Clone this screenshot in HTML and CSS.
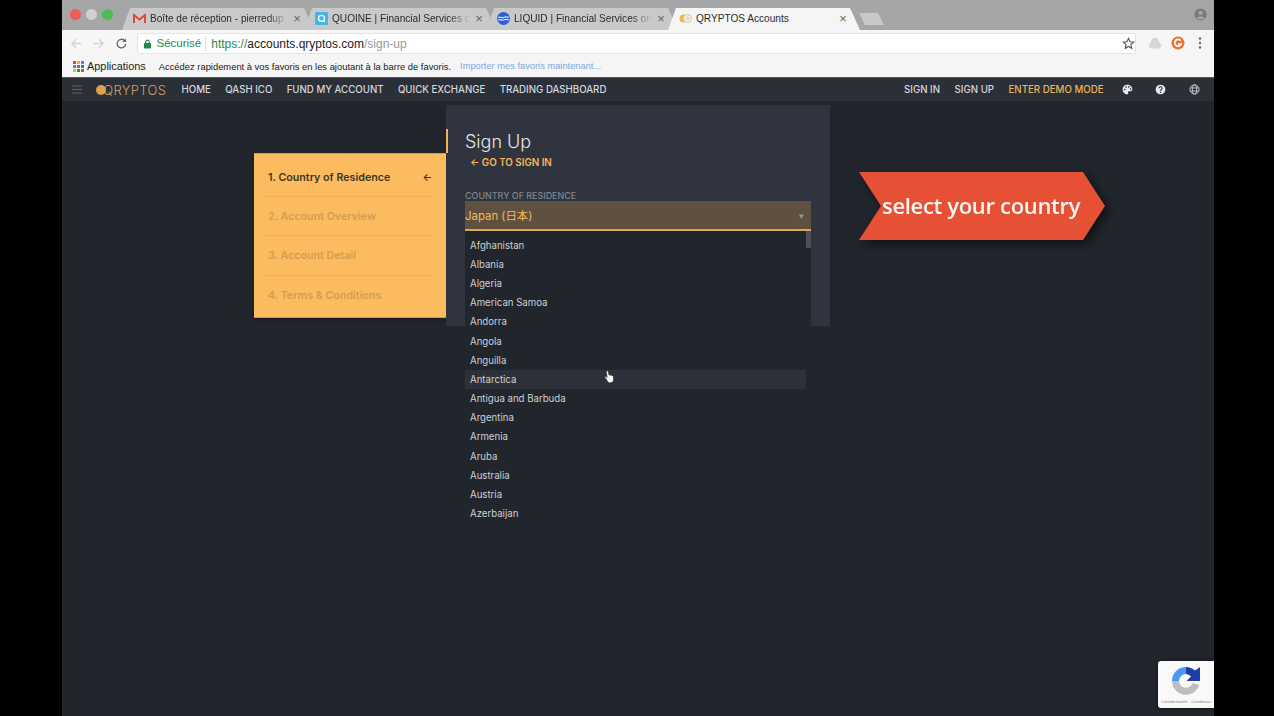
FILE: index.html
```html
<!DOCTYPE html>
<html lang="fr">
<head>
<meta charset="utf-8">
<title>QRYPTOS Accounts</title>
<link rel="stylesheet" href="styles.css">
</head>
<body>
<div class="window">
  <header class="tabstrip">
    <div class="lights"><i class="light red"></i><i class="light grey"></i><i class="light green"></i></div>
    <div class="tabs">
      <div class="tab">
        <svg class="fav" viewBox="0 0 13 13"><path d="M1 11V3l5.500 4.500L12 3v8" fill="none" stroke="#d9493c" stroke-width="2"/></svg>
        <span class="tab-title">Boîte de réception - pierredup</span><span class="tab-x">×</span>
      </div>
      <div class="tab">
        <svg class="fav" viewBox="0 0 13 13"><rect width="13" height="13" rx="1.500" fill="#41b4e8"/><circle cx="6.500" cy="6.300" r="3" fill="none" stroke="#fff" stroke-width="1.300"/><path d="M8 8l2 2" stroke="#fff" stroke-width="1.300"/></svg>
        <span class="tab-title">QUOINE | Financial Services on</span><span class="tab-x">×</span>
      </div>
      <div class="tab">
        <svg class="fav" viewBox="0 0 13 13"><circle cx="6.500" cy="6.500" r="6.500" fill="#2a5fd6"/><path d="M1 5.500c2-1.500 3.500 1 5.500 0s3.500-1 5.500 0M1 8c2-1.500 3.500 1 5.500 0s3.500-1 5.500 0" fill="none" stroke="#cfe0f7" stroke-width="1.200"/></svg>
        <span class="tab-title">LIQUID | Financial Services on</span><span class="tab-x">×</span>
      </div>
      <div class="tab active">
        <svg class="fav" viewBox="0 0 13 13"><circle cx="4.500" cy="6.500" r="4" fill="#e9b94f"/><circle cx="8.500" cy="6.500" r="4" fill="#f4f4f4" stroke="#d8c48a"/><circle cx="8.500" cy="6.500" r="1.500" fill="none" stroke="#d8c48a"/></svg>
        <span class="tab-title">QRYPTOS Accounts</span><span class="tab-x">×</span>
      </div>
      <div class="newtab"></div>
    </div>
    <svg class="profile" viewBox="0 0 14 14"><circle cx="7" cy="7" r="6.500" fill="#7a7a7a"/><circle cx="7" cy="5.200" r="2.300" fill="#a5a5a5"/><path d="M2.800 10.800c1-2.200 7.400-2.200 8.400 0-1.500 1.800-6.900 1.800-8.400 0z" fill="#a5a5a5"/></svg>
  </header>

  <div class="toolbar">
    <svg class="tool" viewBox="0 0 14 14"><path d="M12 7H2M6.500 2.500L2 7l4.500 4.500" fill="none" stroke="#d4d4d4" stroke-width="1.400"/></svg>
    <svg class="tool" viewBox="0 0 14 14"><path d="M2 7h10M7.500 2.500L12 7l-4.500 4.500" fill="none" stroke="#d4d4d4" stroke-width="1.400"/></svg>
    <svg class="tool reload" viewBox="0 0 14 14"><path d="M11.500 7.500a4.600 4.600 0 1 1-1.300-3.700" fill="none" stroke="#666" stroke-width="1.400"/><path d="M11.800 1.500v4h-4z" fill="#666"/></svg>
    <div class="omnibox">
      <svg class="lock" viewBox="0 0 10 11"><rect x="1" y="4.500" width="8" height="6" rx="1" fill="#1f8a4c"/><path d="M3 5V3.200a2 2 0 0 1 4 0V5" fill="none" stroke="#1f8a4c" stroke-width="1.200"/></svg>
      <span class="secure">Sécurisé</span>
      <span class="url"><span class="scheme">https://</span><span class="host">accounts.qryptos.com</span><span class="path">/sign-up</span></span>
      <svg class="star" viewBox="0 0 14 14"><path d="M7 1.500l1.600 3.700 4 .4-3 2.700.9 3.900L7 10.200l-3.500 2 .9-3.900-3-2.700 4-.4z" fill="none" stroke="#555" stroke-width="1.200"/></svg>
    </div>
    <div class="extensions">
      <svg class="ext" viewBox="0 0 14 13"><path d="M5 1.500h4l4.500 7.500-2 3h-9L.5 9z" fill="#d6d6d6"/></svg>
      <svg class="ext" viewBox="0 0 14 14"><circle cx="7" cy="7" r="6.500" fill="#ee6f2d"/><path d="M9.800 4.800A3.400 3.400 0 1 0 10.300 8H7" fill="none" stroke="#fff" stroke-width="1.700"/></svg>
      <svg class="ext dots" viewBox="0 0 4 14"><circle cx="2" cy="2.500" r="1.200" fill="#666"/><circle cx="2" cy="7" r="1.200" fill="#666"/><circle cx="2" cy="11.500" r="1.200" fill="#666"/></svg>
    </div>
  </div>

  <div class="bookmarks">
    <svg class="apps" viewBox="0 0 11 11">
      <rect width="3" height="3" fill="#d9483b"/><rect x="4" width="3" height="3" fill="#f4b400"/><rect x="8" width="3" height="3" fill="#4285f4"/>
      <rect y="4" width="3" height="3" fill="#4285f4"/><rect x="4" y="4" width="3" height="3" fill="#d9483b"/><rect x="8" y="4" width="3" height="3" fill="#0f9d58"/>
      <rect y="8" width="3" height="3" fill="#f4b400"/><rect x="4" y="8" width="3" height="3" fill="#0f9d58"/><rect x="8" y="8" width="3" height="3" fill="#d9483b"/>
    </svg>
    <span class="apps-label">Applications</span>
    <span class="bm-hint">Accédez rapidement à vos favoris en les ajoutant à la barre de favoris.</span>
    <span class="bm-link">Importer mes favoris maintenant...</span>
  </div>

  <nav class="appnav">
    <svg class="burger" viewBox="0 0 10 9"><path d="M0 1h10M0 4.500h10M0 8h10" stroke="#5d626c" stroke-width="1"/></svg>
    <div class="logo">
      <svg class="logo-coin" viewBox="0 0 10 10"><circle cx="5" cy="5" r="5" fill="#dca24a"/></svg>
      <span class="logo-text">QRYPTOS</span>
    </div>
    <a class="navlink">HOME</a>
    <a class="navlink">QASH ICO</a>
    <a class="navlink">FUND MY ACCOUNT</a>
    <a class="navlink">QUICK EXCHANGE</a>
    <a class="navlink">TRADING DASHBOARD</a>
    <div class="nav-right">
      <a class="navlink">SIGN IN</a>
      <a class="navlink">SIGN UP</a>
      <a class="navlink demo">ENTER DEMO MODE</a>
      <svg class="navicon first" viewBox="0 0 12 12"><path d="M6 .8C2.900.8.700 3 .700 5.900c0 3 2.400 5.300 5.100 5.300 1 0 1.300-.8.900-1.500-.5-.9 0-1.700 1-1.700h1.500c1.300 0 2.100-1 2.100-2.200C11.300 2.800 9 .8 6 .8z" fill="#e8e9eb"/><circle cx="3" cy="6" r=".9" fill="#2b2f38"/><circle cx="4.400" cy="3.400" r=".9" fill="#2b2f38"/><circle cx="7.500" cy="3.200" r=".9" fill="#2b2f38"/><circle cx="9.400" cy="5.400" r=".9" fill="#2b2f38"/></svg>
      <svg class="navicon" viewBox="0 0 12 12"><circle cx="6" cy="6" r="5.300" fill="#e8e9eb"/><path d="M4.300 4.600C4.400 2.500 7.800 2.600 7.800 4.600c0 1.300-1.700 1.300-1.700 2.700" fill="none" stroke="#2b2f38" stroke-width="1.200"/><circle cx="6.100" cy="9" r=".8" fill="#2b2f38"/></svg>
      <svg class="navicon" viewBox="0 0 12 12"><g fill="none" stroke="#d8dade" stroke-width=".9"><circle cx="6" cy="6" r="5"/><ellipse cx="6" cy="6" rx="2.300" ry="5"/><path d="M1.300 4.300h9.400M1.300 7.700h9.400"/></g></svg>
    </div>
  </nav>

  <main class="page">
    <aside class="steps">
      <div class="step current"><span>1. Country of Residence</span><span class="step-arrow">←</span></div>
      <div class="step">2. Account Overview</div>
      <div class="step">3. Account Detail</div>
      <div class="step last">4. Terms &amp; Conditions</div>
    </aside>
    <section class="panel">
      <h1 class="title">Sign Up</h1>
      <a class="back">← GO TO SIGN IN</a>
      <label class="field-label">COUNTRY OF RESIDENCE</label>
      <div class="select"><span>Japan (日本)</span><span class="caret">▾</span></div>
      <div class="dropdown">
        <i class="scroll-thumb"></i>
        <div class="option">Afghanistan</div>
        <div class="option">Albania</div>
        <div class="option">Algeria</div>
        <div class="option">American Samoa</div>
        <div class="option">Andorra</div>
        <div class="option">Angola</div>
        <div class="option">Anguilla</div>
        <div class="option hover">Antarctica</div>
        <div class="option">Antigua and Barbuda</div>
        <div class="option">Argentina</div>
        <div class="option">Armenia</div>
        <div class="option">Aruba</div>
        <div class="option">Australia</div>
        <div class="option">Austria</div>
        <div class="option">Azerbaijan</div>
      </div>
    </section>

    <div class="ribbon-wrap"><div class="ribbon">select your country</div></div>

    <svg class="cursor" viewBox="0 0 10 13"><path d="M2.500 1c.7-.5 1.300 0 1.500.8l.7 3 .3-.2c.5-.3 1-.1 1.200.3.500-.3 1-.1 1.200.4.600-.2 1.200.2 1.300.8l.1 3c0 1.400-1 2.800-2.500 2.800H5.200c-1 0-1.600-.6-2.100-1.500L.8 6.900c-.3-.7.400-1.300 1-.9l1 .9L2 2c-.1-.4.100-.8.500-1z" fill="#f4f4f4" stroke="#222" stroke-width=".6"/></svg>

    <div class="recaptcha">
      <svg class="rc-logo" viewBox="0 0 30 30">
        <path d="M4.500 15A10.500 10.500 0 0 0 25 18" fill="none" stroke="#bdbdbd" stroke-width="7"/>
        <path d="M1 15A14 14 0 0 1 15 1v7a7 7 0 0 0-7 7z" fill="#4d97f5"/>
        <path d="M15 1a14 14 0 0 1 9 3.500L29 1v14H15.500l4.500-4.500A8 8 0 0 0 15 8z" fill="#1f3fa6"/>
      </svg>
      <span class="rc-text">Confidentialité - Conditions</span>
    </div>
  </main>
</div>
</body>
</html>
```

FILE: styles.css
```css
* { box-sizing: border-box; }
html, body { margin: 0; height: 100%; background: #000; overflow: hidden; }
body { font-family: "Liberation Sans", Arial, sans-serif; }
.window { width: 1152px; height: 716px; margin-left: 62px; display: flex; flex-direction: column; overflow: hidden; background: #21252c; }

/* browser chrome */
.tabstrip { height: 30px; flex: none; background: #a6a6a6; display: flex; align-items: flex-end; position: relative; }
.lights { display: flex; gap: 5px; padding-left: 8px; width: 60px; align-self: flex-start; padding-top: 9px; }
.light { width: 11px; height: 11px; border-radius: 50%; display: block; }
.red { background: #ec5f59; }
.grey { background: #d0d0d0; }
.green { background: #4fbb55; }
.tabs { display: flex; align-items: flex-end; height: 22px; }
.tab { width: 192px; height: 22px; margin-right: -10px; padding: 0 12px 2px 11px; display: flex; align-items: center; gap: 4px; background: #c9c9c9; clip-path: polygon(8px 0, 182px 0, 192px 100%, 0 100%); font-size: 10.100px; color: #2b2b2b; }
.tab.active { background: #f5f5f5; position: relative; z-index: 1; }
.fav { width: 13px; height: 13px; flex: none; }
.tab-title { flex: 1; min-width: 0; white-space: nowrap; overflow: hidden; -webkit-mask-image: linear-gradient(90deg, #000 85%, transparent 100%); mask-image: linear-gradient(90deg, #000 85%, transparent 100%); }
.tab.active .tab-title { -webkit-mask-image: none; mask-image: none; }
.tab-x { width: 10px; font-size: 13px; color: #666; text-align: center; flex: none; }
.newtab { width: 25px; height: 12px; margin: 0 0 5px 9px; align-self: flex-end; background: #c9c9c9; clip-path: polygon(0 0, 19px 0, 25px 100%, 6px 100%); }
.profile { width: 13px; height: 13px; margin: 0 7px 9px auto; align-self: flex-end; }

.toolbar { height: 25px; flex: none; background: #f6f6f6; display: flex; align-items: flex-start; padding: 3px 7px 0 7.500px; gap: 9px; }
.tool { width: 13px; height: 13px; flex: none; margin-top: 4px; }
.tool.reload { margin-left: 1px; }
.omnibox { width: 999px; height: 21px; background: #fff; border: 1px solid #e4e4e4; border-radius: 2px; display: flex; align-items: center; padding: 0 0 0 5px; font-size: 11.500px; }
.lock { width: 9px; height: 10px; flex: none; }
.secure { color: #1f8a4c; padding: 0 4px 0 5px; border-right: 1px solid #ddd; margin-right: 5px; line-height: 15px; }
.url { flex: 1; white-space: nowrap; font-size: 12px; }
.scheme { color: #1f8a4c; }
.host { color: #222; }
.path { color: #999; }
.star { width: 13px; height: 13px; flex: none; }
.extensions { display: flex; align-items: center; gap: 9px; margin-left: 3px; margin-top: 3px; }
.ext { width: 14px; height: 14px; flex: none; }
.ext.dots { width: 4px; margin-left: 4px; }

.bookmarks { height: 23px; flex: none; background: #f5f5f5; display: flex; align-items: center; padding-left: 11px; border-bottom: 1px solid #55585e; white-space: nowrap; }
.apps { width: 11px; height: 11px; flex: none; }
.apps-label { font-size: 10.900px; color: #222; margin-left: 3px; }
.bm-hint { font-size: 9.400px; color: #222; margin-left: 13px; }
.bm-link { font-size: 9.300px; color: #7da7e2; margin-left: 9px; }

/* app nav */
.appnav { height: 23px; flex: none; background: #2b2f38; display: flex; align-items: center; padding-left: 10px; gap: 14.300px; font-family: Inter, "Liberation Sans", sans-serif; font-size: 9.700px; font-weight: 500; color: #d6d8dc; white-space: nowrap; }
.burger { width: 10px; height: 9px; flex: none; }
.logo { display: flex; align-items: center; width: 71px; flex: none; }
.logo-coin { width: 10px; height: 10px; flex: none; }
.logo-text { font-size: 13px; font-weight: 300; color: #cfa45f; letter-spacing: .35px; margin-left: -3px; }
.navlink { display: block; }
.demo { color: #f0b35a; }
.nav-right { margin-left: auto; display: flex; align-items: center; gap: 14.500px; padding-right: 14.500px; }
.navicon { width: 11px; height: 11px; flex: none; margin-left: 8px; }
.navicon.first { margin-left: 3.500px; }

/* page */
.page { flex: 1; position: relative; display: flex; align-items: flex-start; padding: 4px 0 0 192px; background: #21252c; font-family: Inter, "Liberation Sans", sans-serif; }
.steps { width: 192px; margin-top: 48px; padding: 4px 10px 2px 10px; background: #fdbb5f; border-top: 1px solid #cf9a52; border-bottom: 1px solid #cf9a52; font-size: 10.700px; font-weight: 600; color: #d39d52; box-shadow: 0 2px 4px rgba(0,0,0,.3); }
.step { height: 39.200px; padding: 0 4px; display: flex; align-items: center; justify-content: space-between; border-bottom: 1px solid #f3b258; white-space: nowrap; }
.step.last { border-bottom: 0; }
.step.current { color: #3f3526; }
.step-arrow { font-size: 10px; padding-right: 0; }

.panel { width: 384px; height: 221px; padding: 27px 19px 0; background: #30343e; position: relative; display: flex; flex-direction: column; align-items: flex-start; }
.panel::before { content: ""; position: absolute; left: 0; top: 24px; height: 24px; width: 2px; background: #f2b45c; }
.title { margin: 0; font-size: 18px; line-height: 20px; font-weight: 300; color: #e6e7ea; }
.back { margin: 5px 0 0 5px; font-size: 9.800px; line-height: 12px; font-weight: 600; color: #f5b65c; white-space: nowrap; }
.field-label { margin-top: 22px; font-size: 8.950px; line-height: 10px; font-weight: 500; color: #7f8590; }
.select { width: 346px; height: 30px; margin-top: 0; background: #5e5140; border-bottom: 2px solid #dba65a; display: flex; align-items: center; justify-content: space-between; font-size: 11.400px; color: #f4b65e; font-family: Inter, "Noto Sans CJK JP", sans-serif; }
.caret { font-size: 9px; color: #a39a8c; padding-right: 7px; }
.dropdown { position: absolute; left: 19px; top: 126px; width: 346px; padding-right: 5px; padding-top: 4.500px; background: #21252c; z-index: 2; }
.scroll-thumb { position: absolute; right: 0; top: 0; width: 5px; height: 17px; background: #4a4f5a; display: block; }
.option { height: 19.200px; padding-left: 5px; display: flex; align-items: center; font-size: 9.650px; color: #cfd1d5; white-space: nowrap; }
.option.hover { background: #2d3038; }

.ribbon-wrap { position: absolute; left: 797px; top: 71px; filter: drop-shadow(4px 4px 5px rgba(0,0,0,.55)); }
.ribbon { width: 246px; height: 68px; padding: 0 0 2px 23px; background: #e65135; clip-path: polygon(0 0, 224px 0, 100% 50%, 224px 100%, 0 100%, 22px 50%); display: flex; align-items: center; font-family: "Open Sans", "Noto Sans", sans-serif; font-size: 22px; letter-spacing: -.320px; font-weight: 600; color: #f8f5f2; white-space: nowrap; }

.cursor { position: absolute; left: 542px; top: 269px; width: 11px; height: 14px; z-index: 3; }

.recaptcha { position: absolute; right: 0; top: 560px; width: 56px; height: 47px; background: #f9f9f9; border-radius: 3px 0 0 3px; box-shadow: 0 0 4px rgba(0,0,0,.5); display: flex; flex-direction: column; align-items: center; padding-top: 5px; }
.rc-logo { width: 30px; height: 30px; flex: none; }
.rc-text { font-size: 4.200px; line-height: 6px; margin-top: 3px; color: #888; font-family: "Liberation Sans", sans-serif; white-space: nowrap; }
```
